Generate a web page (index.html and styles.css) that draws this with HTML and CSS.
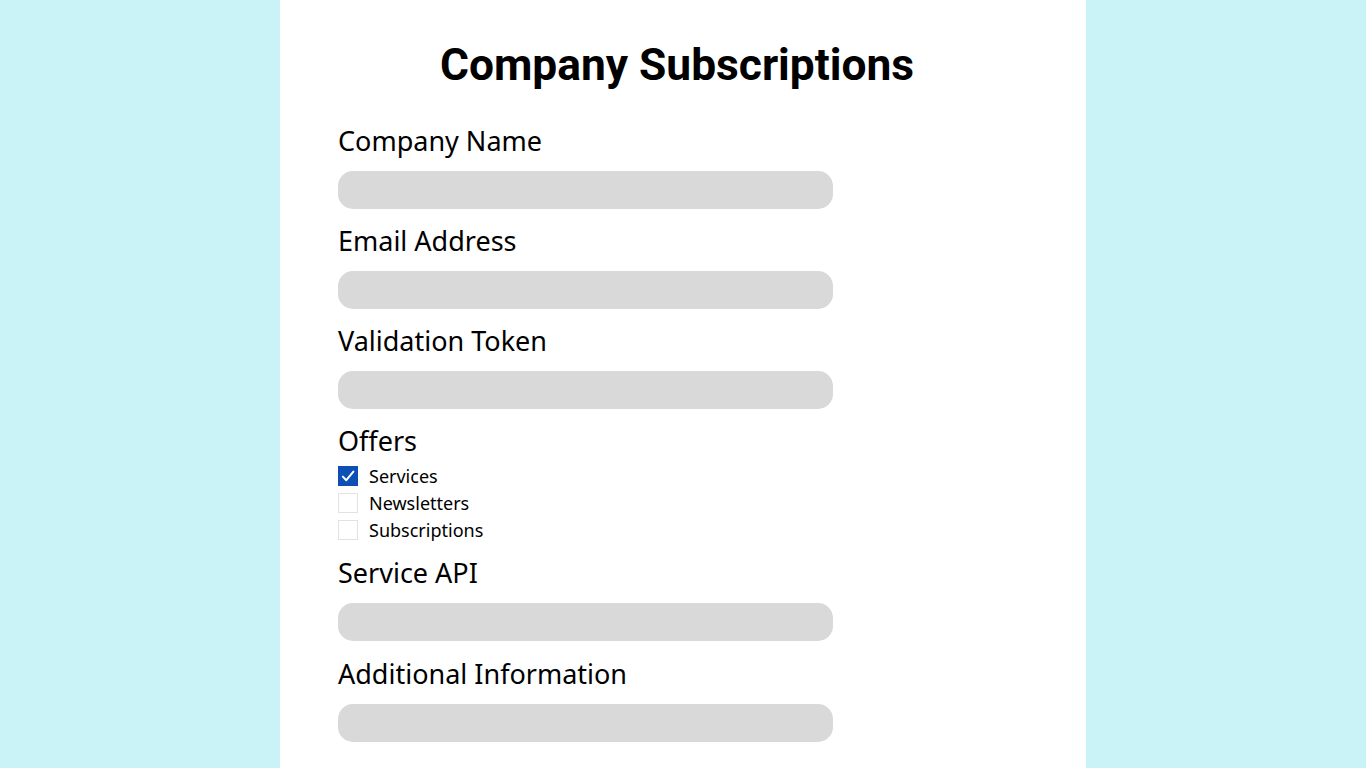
FILE: index.html
```html
<!DOCTYPE html>
<html lang="en">
<head>
<meta charset="utf-8">
<title>Company Subscriptions</title>
<link rel="stylesheet" href="styles.css">
</head>
<body>
<main class="panel">
  <h1 class="title">Company Subscriptions</h1>
  <form class="form">
    <div class="field">
      <label class="label">Company Name</label>
      <div class="input"></div>
    </div>
    <div class="field">
      <label class="label">Email Address</label>
      <div class="input"></div>
    </div>
    <div class="field">
      <label class="label">Validation Token</label>
      <div class="input"></div>
    </div>
    <div class="field">
      <label class="label">Offers</label>
      <div class="checks">
        <div class="check-row">
          <span class="box box-checked">
            <svg viewBox="0 0 20 20" width="20" height="20"><path d="M4.8 10.6 L8.3 14.2 L15.4 5.6" fill="none" stroke="#ffffff" stroke-width="2" stroke-linecap="round" stroke-linejoin="round"/></svg>
          </span>
          <span class="check-label">Services</span>
        </div>
        <div class="check-row">
          <span class="box"></span>
          <span class="check-label">Newsletters</span>
        </div>
        <div class="check-row">
          <span class="box"></span>
          <span class="check-label">Subscriptions</span>
        </div>
      </div>
    </div>
    <div class="field">
      <label class="label">Service API</label>
      <div class="input"></div>
    </div>
    <div class="field field-last">
      <label class="label">Additional Information</label>
      <div class="input"></div>
    </div>
  </form>
</main>
</body>
</html>
```
FILE: styles.css
```css
html, body {
  margin: 0;
  padding: 0;
}
body {
  background: #c9f3f6;
  display: flex;
  justify-content: center;
  min-height: 768px;
  font-family: "Noto Sans", "Open Sans", sans-serif;
  color: #000;
}
.panel {
  width: 806px;
  background: #ffffff;
  min-height: 768px;
  box-sizing: border-box;
  padding: 43px 58px 0;
}
.title {
  margin: 0 0 40px;
  font-family: Roboto, "Liberation Sans", sans-serif;
  font-weight: 700;
  font-size: 44.3px;
  line-height: 44px;
  text-align: center;
  padding-right: 12px;
}
.form {
  display: flex;
  flex-direction: column;
  gap: 18px;
}
.field {
  display: flex;
  flex-direction: column;
  gap: 15px;
}
.field-last {
  margin-top: 1px;
}
.label {
  font-size: 27px;
  line-height: 30px;
  font-weight: 400;
  margin-top: -1px;
}
.input {
  width: 495px;
  height: 38px;
  border-radius: 15px;
  background: #d9d9d9;
}
.checks {
  display: flex;
  flex-direction: column;
  gap: 7px;
  margin-top: -5px;
  margin-bottom: 1px;
}
.check-row {
  display: flex;
  align-items: center;
  gap: 11px;
  height: 20px;
}
.box {
  width: 20px;
  height: 20px;
  box-sizing: border-box;
  border: 1px solid #e2e2e2;
  background: #fff;
  display: flex;
}
.box-checked {
  background: #0d4fb4;
  border-color: #0d4fb4;
}
.box-checked svg {
  margin: -1px;
}
.check-label {
  font-size: 18px;
  line-height: 20px;
}
```
